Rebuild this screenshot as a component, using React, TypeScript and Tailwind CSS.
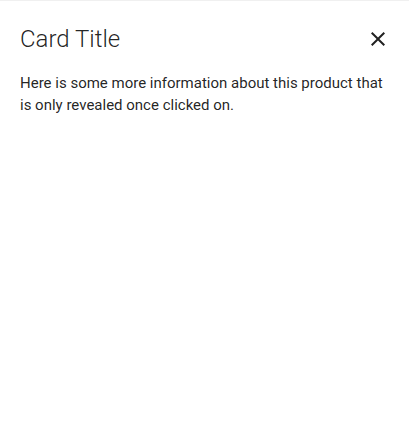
export default function App() {
  return (
    <div className="min-h-[424px] w-full bg-white border-t border-[#f0f0f0] font-['Roboto',sans-serif] text-[rgba(0,0,0,0.87)]">
      <div className="px-5 pt-[22px]">
        <div className="flex items-center justify-between h-8">
          <span className="text-2xl font-light leading-8">Card Title</span>
          <button className="w-6 h-6 -mr-px flex items-center justify-center" aria-label="close">
            <svg width="24" height="24" viewBox="0 0 24 24" fill="currentColor">
              <path d="M19 6.41 17.59 5 12 10.59 6.41 5 5 6.41 10.59 12 5 17.59 6.41 19 12 13.41 17.59 19 19 17.59 13.41 12z" />
            </svg>
          </button>
        </div>
        <p className="mt-[17px] text-[15px] leading-[22px]">
          Here is some more information about this product that is only revealed once clicked on.
        </p>
      </div>
    </div>
  );
}
